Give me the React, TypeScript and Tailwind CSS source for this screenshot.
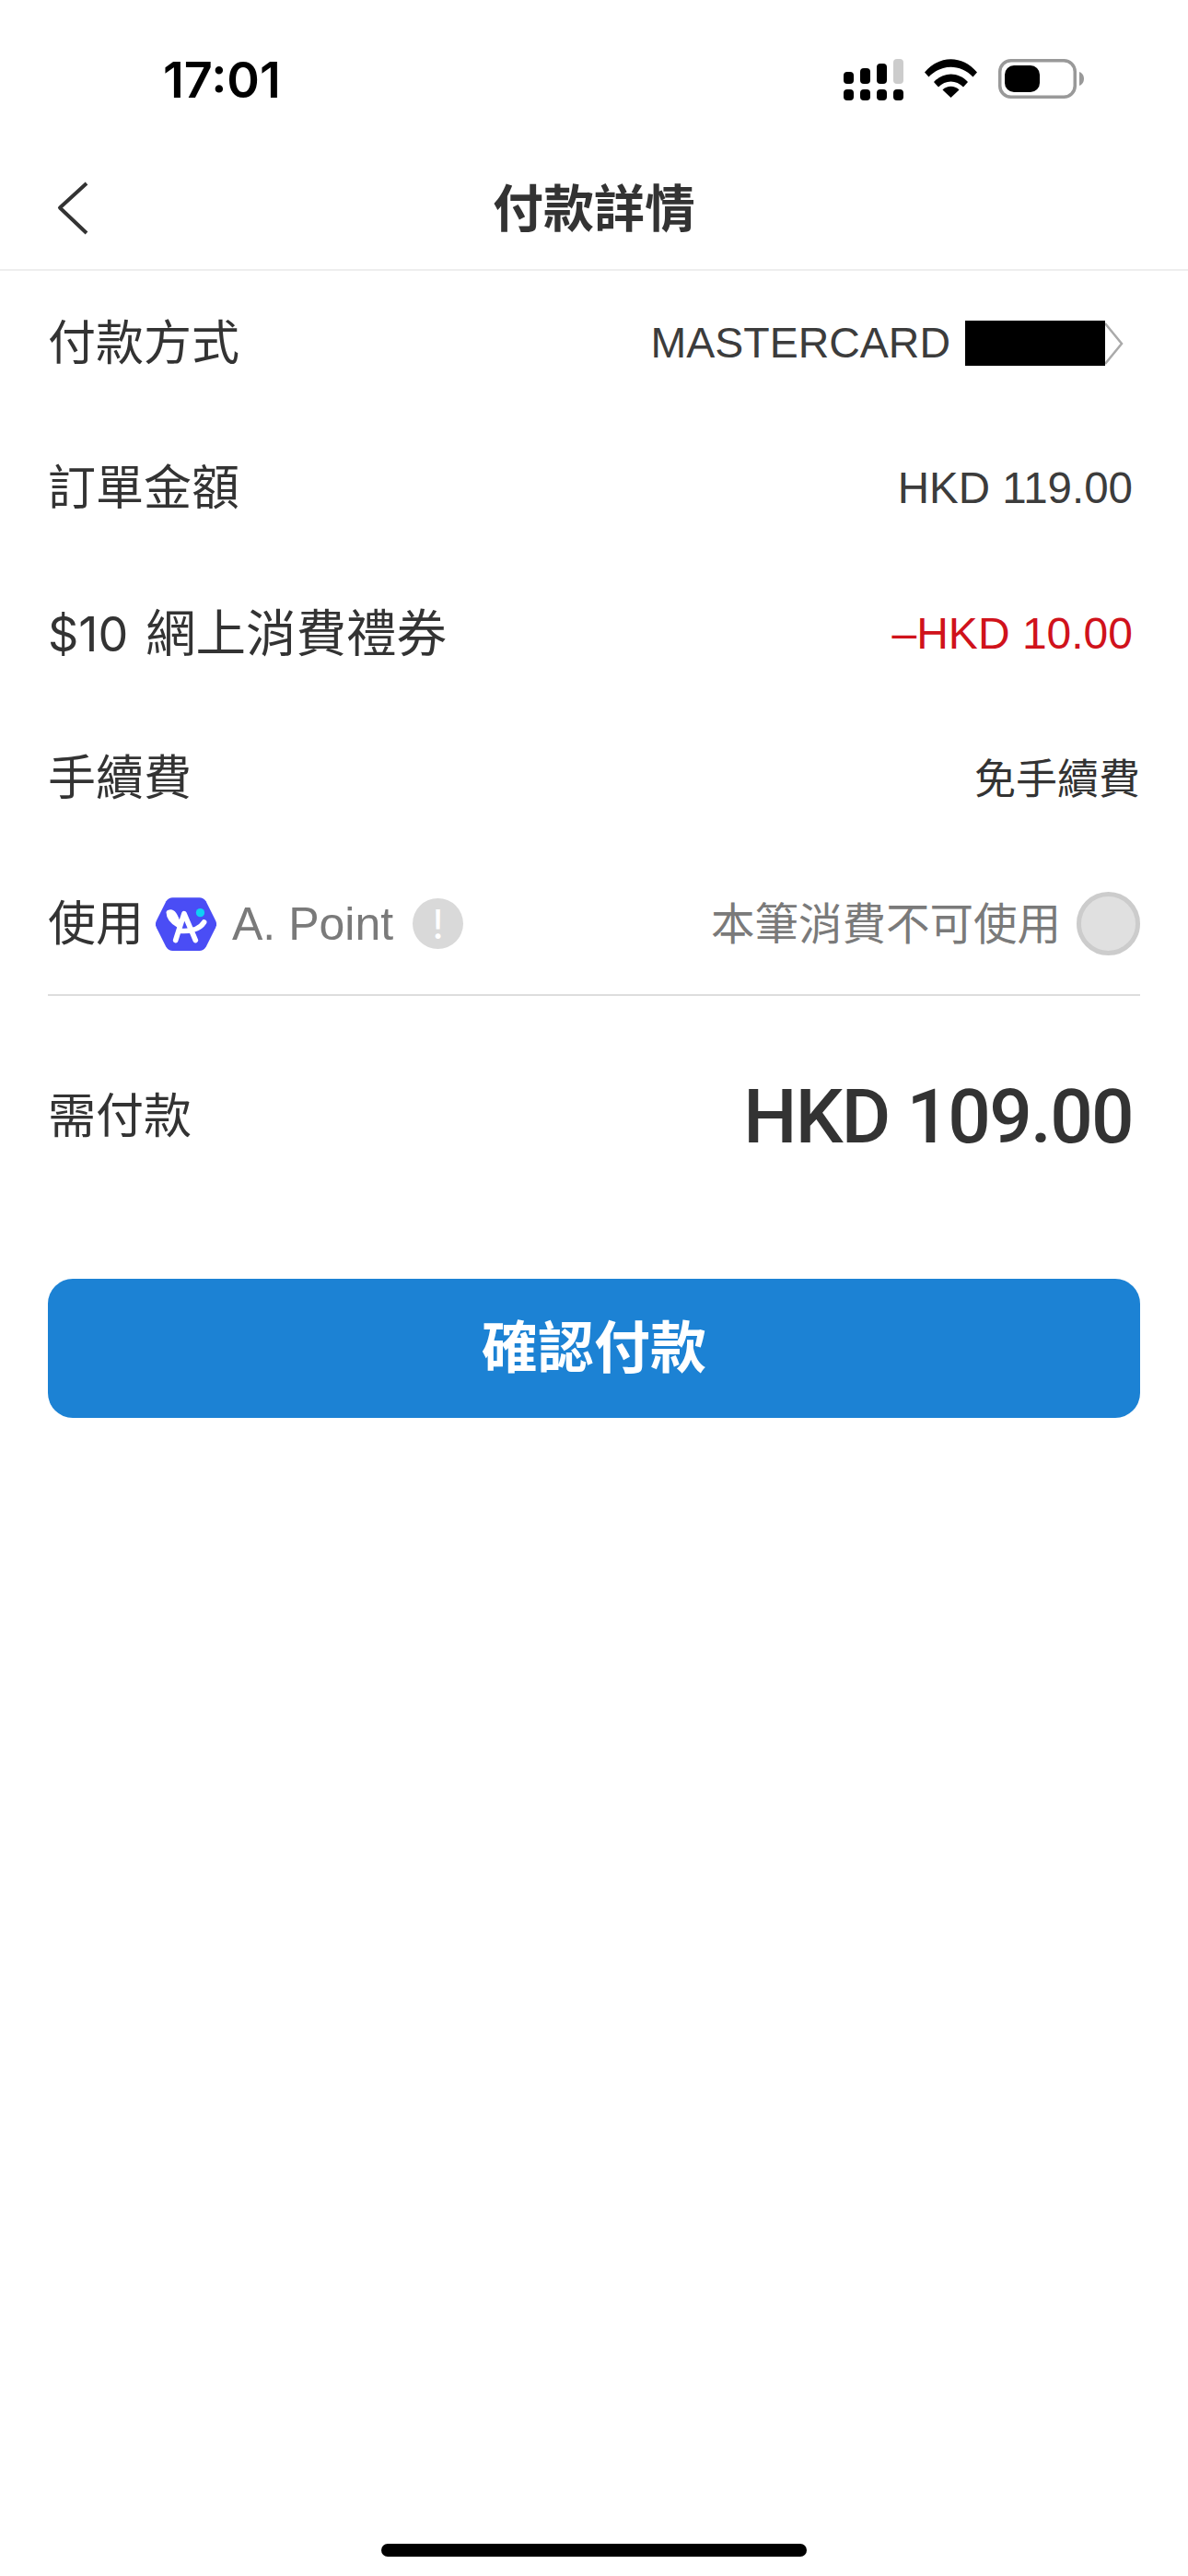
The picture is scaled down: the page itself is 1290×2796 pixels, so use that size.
const cjk = "font-['Inter','Noto_Sans_CJK_TC',sans-serif]";

function SignalIcon() {
  return (
    <svg width="65" height="45" viewBox="0 0 65 45">
      <rect x="0" y="14" width="11" height="13" rx="4" fill="#000" />
      <rect x="18" y="10" width="11" height="17" rx="4" fill="#000" />
      <rect x="36" y="5" width="11" height="22" rx="4" fill="#000" />
      <rect x="54" y="0" width="11" height="27" rx="4" fill="#ccc" />
      <rect x="0" y="33" width="11" height="12" rx="4" fill="#000" />
      <rect x="18" y="33" width="11" height="12" rx="4" fill="#000" />
      <rect x="36" y="33" width="11" height="12" rx="4" fill="#000" />
      <rect x="54" y="33" width="11" height="12" rx="4" fill="#000" />
    </svg>
  );
}

function WifiIcon() {
  return (
    <svg width="57" height="42" viewBox="0 0 57 42">
      <path d="M0 14.5 C16 -4.5 41 -4.5 57 14.5 L52.5 19.5 C39 5 18 5 4.5 19.5 Z" fill="#000" />
      <path d="M10 25 C20 13.5 37 13.5 47 25 L42 30.5 C34.5 22.5 22.5 22.5 15 30.5 Z" fill="#000" />
      <path d="M19.5 33.5 C24.5 28.5 32.5 28.5 37.5 33.5 L28.5 42 Z" fill="#000" />
    </svg>
  );
}

function BatteryIcon() {
  return (
    <svg width="93" height="43" viewBox="0 0 93 43">
      <rect x="1.75" y="1.75" width="81.5" height="39.5" rx="12" fill="#fff" stroke="#999" strokeWidth="3.5" />
      <rect x="7" y="7" width="38" height="29" rx="10" fill="#000" />
      <path d="M88 14 C91 15 93 18 93 21.5 C93 25 91 28 88 29 Z" fill="#999" />
    </svg>
  );
}

function BackIcon() {
  return (
    <svg width="34" height="58" viewBox="0 0 34 58" fill="none">
      <path d="M32 2 L3 28.5 L32 56" stroke="#333" strokeWidth="4" strokeLinejoin="round" />
    </svg>
  );
}

function PointLogo() {
  return (
    <svg width="66" height="60" viewBox="1 2 64 56" fill="none">
      <path
        d="M19 2 H47 C50 2 52 3 54 6 L64 26 C65.5 29 65.5 31 64 34 L54 54 C52 57 50 58 47 58 H19 C16 58 14 57 12 54 L2 34 C0.5 31 0.5 29 2 26 L12 6 C14 3 16 2 19 2 Z"
        fill="#4a4df5"
      />
      <path
        d="M15 18 C15 23 20 28 25 31 M15 18 C19 16 22 21 25 31 M22 47 L31 19 L43 47 M26 37 C36 38 47 36 52 28"
        stroke="#fff"
        strokeWidth="5.5"
        strokeLinecap="round"
        strokeLinejoin="round"
      />
      <circle cx="48" cy="18" r="4.5" fill="#0fd0f5" />
    </svg>
  );
}

function Row({ label, children }: { label: React.ReactNode; children: React.ReactNode }) {
  return (
    <div className="flex h-[157.5px] items-center justify-between">
      <div className="text-[52px] leading-none text-[#333]">{label}</div>
      {children}
    </div>
  );
}

export default function App() {
  return (
    <div className={`flex min-h-[2796px] flex-col bg-white ${cjk}`}>
      {/* Status bar */}
      <div className="flex h-[130px] items-start justify-between pt-[60px] pl-[177px] pr-[113px]">
        <span className="text-[54px] font-semibold leading-[54px] text-black">17:01</span>
        <div className="flex items-start gap-[23px] pt-[4px]">
          <SignalIcon />
          <WifiIcon />
          <BatteryIcon />
        </div>
      </div>

      {/* Nav */}
      <div className="relative flex h-[164px] items-center justify-center border-b-2 border-[#eee] pt-[31px]">
        <div className="absolute left-[62px] top-[67px]">
          <BackIcon />
        </div>
        <h1 className="text-[55px] font-bold leading-none text-[#333]">付款詳情</h1>
      </div>

      {/* Rows */}
      <div className="mx-[52px] border-b-2 border-[#ddd]">
        <Row label="付款方式">
          <div className="flex items-center">
            <span className="pb-[2px] text-[46.5px] leading-none text-[#3c3c3c] font-['Liberation_Sans',sans-serif]">MASTERCARD</span>
            <div className="ml-[16px] h-[49px] w-[152px] bg-black" />
            <svg width="20" height="46" viewBox="0 0 20 46" fill="none">
              <path d="M0 1 L18 23 L0 45" stroke="#aaa" strokeWidth="2.5" />
            </svg>
            <div className="w-[18px]" />
          </div>
        </Row>
        <Row label="訂單金額">
          <span className="pr-[8px] pb-[2px] text-[47.5px] leading-none text-[#3c3c3c] font-['Liberation_Sans',sans-serif]">HKD 119.00</span>
        </Row>
        <Row
          label={
            <>
              $10 <span className="ml-[4px] text-[54.5px]">網上消費禮券</span>
            </>
          }
        >
          <span className="pr-[8px] text-[48px] leading-none text-[#d0121b] font-['Liberation_Sans',sans-serif]">–HKD 10.00</span>
        </Row>
        <Row label="手續費">
          <span className="text-[45px] leading-none text-[#333]">免手續費</span>
        </Row>
        <div className="flex h-[155px] items-center justify-between pt-[2px]">
          <div className="flex items-center">
            <span className="text-[52px] leading-none text-[#333]">使用</span>
            <div className="ml-[13px]">
              <PointLogo />
            </div>
            <span className="ml-[17px] text-[50px] leading-none text-[#7a7a7a] font-['Liberation_Sans',sans-serif]">A. Point</span>
            <div className="ml-[21px] flex h-[55px] w-[55px] items-center justify-center rounded-full bg-[#d9d9d9]">
              <span className="text-[44px] font-normal leading-none text-white">!</span>
            </div>
          </div>
          <div className="flex items-center gap-[17px]">
            <span className="text-[47.5px] leading-none text-[#7a7a7a]">本筆消費不可使用</span>
            <div className="h-[69px] w-[69px] rounded-full border-[5px] border-[#ccc] bg-[#e0e0e0]" />
          </div>
        </div>
      </div>

      {/* Total */}
      <div className="mx-[52px] flex h-[261px] items-center justify-between">
        <span className="text-[52px] leading-none text-[#333]">需付款</span>
        <span className="pr-[8px] text-[82px] font-medium leading-none tracking-[-1.7px] text-[#333] font-['Roboto',sans-serif]">HKD 109.00</span>
      </div>

      {/* Confirm */}
      <button className="mx-[52px] mt-[46px] flex h-[151px] items-center justify-center rounded-[27px] bg-[#1c82d4] text-[61px] font-bold leading-none text-white">
        確認付款
      </button>

      {/* Home indicator */}
      <div className="mt-auto mb-[21px] flex justify-center">
        <div className="h-[14px] w-[462px] rounded-full bg-black" />
      </div>
    </div>
  );
}
